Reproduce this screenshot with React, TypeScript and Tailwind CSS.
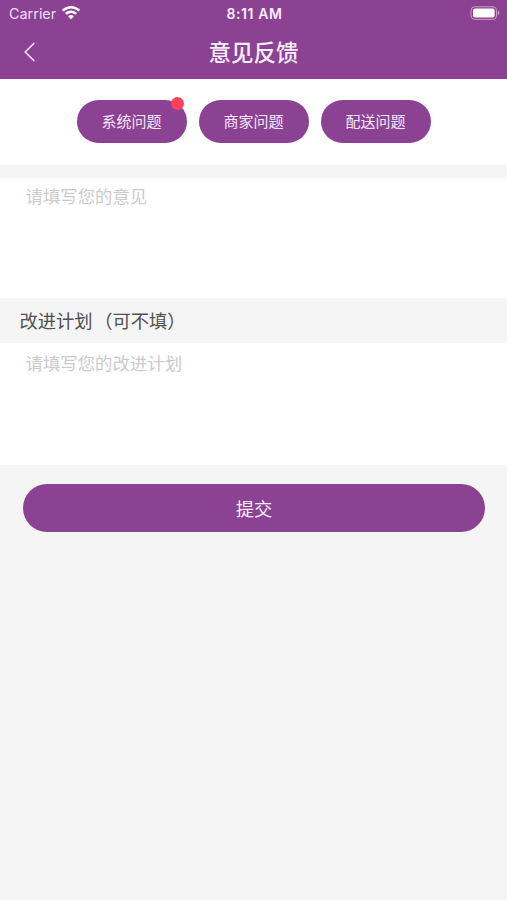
type FeedbackType = {
  label: string;
  active?: boolean;
};

const feedbackTypes: FeedbackType[] = [
  { label: "系统问题", active: true },
  { label: "商家问题" },
  { label: "配送问题" },
];

function StatusBar() {
  return (
    <div className="grid grid-cols-3 items-center h-[26px] pl-[9px] pr-[7px]">
      <div className="flex items-center gap-[6px] font-['Inter','Liberation_Sans',sans-serif] text-[14.4px] text-[#f3dcf5]">
        <span className="pt-px">Carrier</span>
        <svg width="18" height="14" viewBox="0 0 18 14" fill="#fff">
          <path d="M9 0C5.6 0 2.5 1.3.2 3.5a.5.5 0 0 0 0 .7l1.1 1.1c.2.2.5.2.7 0A10 10 0 0 1 9 2.6c2.7 0 5.1 1 7 2.7.2.2.5.2.7 0l1.1-1.1a.5.5 0 0 0 0-.7A12.7 12.7 0 0 0 9 0z" />
          <path d="M9 4.5c-2.2 0-4.2.8-5.7 2.2a.5.5 0 0 0 0 .7l1.2 1.2c.2.2.5.2.7 0A5.6 5.6 0 0 1 9 7.1c1.5 0 2.8.6 3.8 1.5.2.2.5.2.7 0l1.2-1.2a.5.5 0 0 0 0-.7A8.3 8.3 0 0 0 9 4.5z" />
          <path d="M9 9c-1 0-1.9.4-2.6 1a.5.5 0 0 0 0 .7l2.2 2.3c.2.2.6.2.8 0l2.2-2.3a.5.5 0 0 0 0-.7A3.8 3.8 0 0 0 9 9z" />
        </svg>
      </div>
      <span className="text-center font-['Inter','Liberation_Sans',sans-serif] text-[14px] font-semibold tracking-[0.6px] text-[#fbeefc]">
        8:11 AM
      </span>
      <svg className="justify-self-end" width="30" height="14" viewBox="0 0 30 14">
        <rect x="1.1" y="0.8" width="25.4" height="12.6" rx="3.5" fill="none" stroke="#c89bcb" strokeWidth="1" />
        <rect x="3" y="2.6" width="21.6" height="9" rx="2" fill="#fff" />
        <path d="M27.8 4.8c1 .4 1.6 1.2 1.6 2.2s-.6 1.8-1.6 2.2z" fill="#c89bcb" />
      </svg>
    </div>
  );
}

function Header() {
  return (
    <header className="h-[79px] bg-[#8b4293]">
      <StatusBar />
      <div className="grid grid-cols-[60px_1fr_60px] items-center h-[51px]">
        <button aria-label="返回" className="pl-[24px]">
          <svg width="12" height="20" viewBox="0 0 12 20" fill="none" stroke="#fbe9fc" strokeWidth="1.5">
            <path d="M10.3 1 1.2 10l9.1 9" />
          </svg>
        </button>
        <h1 className="pb-px text-center text-[22.5px] leading-[31px] font-medium text-[#fbeefc]">意见反馈</h1>
      </div>
    </header>
  );
}

function TypeButton({ label, active }: FeedbackType) {
  return (
    <button className="relative w-[110px] h-[43px] pb-[2px] rounded-full bg-[#8b4293] text-[15px] leading-[22px] text-[#f8e6fa]">
      {label}
      {active && <span className="absolute -top-[3px] right-[3px] size-[13px] rounded-full bg-[#ff4058]" />}
    </button>
  );
}

export default function App() {
  return (
    <div className="min-h-screen bg-[#f5f5f5] font-['Noto_Sans_CJK_SC',sans-serif]">
      <Header />
      <div className="flex justify-center gap-[12px] h-[86px] pt-[21px] bg-white">
        {feedbackTypes.map((type) => (
          <TypeButton key={type.label} label={type.label} active={type.active} />
        ))}
      </div>
      <textarea
        className="block mt-[13px] w-full h-[120px] px-[25.5px] pt-[5px] bg-white text-[17.4px] leading-[26px] placeholder:text-[#cbcbcb] resize-none outline-none"
        placeholder="请填写您的意见"
      />
      <div className="flex items-center h-[45px] px-[19.5px] pb-px text-[18.3px] leading-[26px] text-[#505050]">
        改进计划<span className="ml-[1.5px]">（可不填）</span>
      </div>
      <textarea
        className="block w-full h-[122px] px-[25.5px] pt-[7px] bg-white text-[17.4px] leading-[26px] placeholder:text-[#cbcbcb] resize-none outline-none"
        placeholder="请填写您的改进计划"
      />
      <div className="pt-[19px] pl-[23px] pr-[22px]">
        <button className="w-full h-[48px] pb-px rounded-full bg-[#8b4293] text-[18.3px] leading-[26px] text-[#fbeefc]">
          提交
        </button>
      </div>
    </div>
  );
}
